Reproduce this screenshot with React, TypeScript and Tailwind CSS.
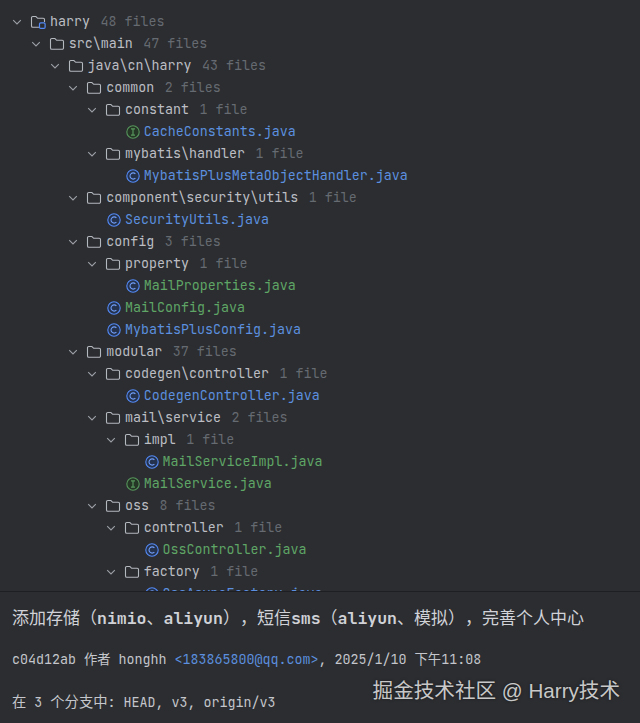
const rows: [number, string, string, string][] = [
  [0, "harry", "48 files", "m"],
  [1, "src\\main", "47 files", "d"],
  [2, "java\\cn\\harry", "43 files", "d"],
  [3, "common", "2 files", "d"],
  [4, "constant", "1 file", "d"],
  [5, "CacheConstants.java", "", "ib"],
  [4, "mybatis\\handler", "1 file", "d"],
  [5, "MybatisPlusMetaObjectHandler.java", "", "cb"],
  [3, "component\\security\\utils", "1 file", "d"],
  [4, "SecurityUtils.java", "", "cb"],
  [3, "config", "3 files", "d"],
  [4, "property", "1 file", "d"],
  [5, "MailProperties.java", "", "cg"],
  [4, "MailConfig.java", "", "cg"],
  [4, "MybatisPlusConfig.java", "", "cb"],
  [3, "modular", "37 files", "d"],
  [4, "codegen\\controller", "1 file", "d"],
  [5, "CodegenController.java", "", "cb"],
  [4, "mail\\service", "2 files", "d"],
  [5, "impl", "1 file", "d"],
  [6, "MailServiceImpl.java", "", "cg"],
  [5, "MailService.java", "", "ig"],
  [4, "oss", "8 files", "d"],
  [5, "controller", "1 file", "d"],
  [6, "OssController.java", "", "cg"],
  [5, "factory", "1 file", "d"],
  [6, "OssAsyncFactory.java", "", "cb"],
];

const mono = "font-['JetBrains_Mono','DejaVu_Sans_Mono','Noto_Sans_CJK_SC',monospace]";

function Chevron() {
  return (
    <svg width="14" height="14" viewBox="0 0 14 14" fill="none" className="shrink-0">
      <path d="M3.2 5.2 7 9l3.8-3.8" stroke="#9da0a8" strokeWidth="1.1" />
    </svg>
  );
}

function Folder({ module }: { module: boolean }) {
  return (
    <svg width="16" height="16" viewBox="0 0 16 16" fill="none" className="shrink-0">
      {module ? (
        <>
          <path d="M9.5 13.2H2.8a1.3 1.3 0 0 1-1.3-1.3V3.8a1.3 1.3 0 0 1 1.3-1.3h3.1l1.8 1.8h5.5a1.3 1.3 0 0 1 1.3 1.3V8" stroke="#b4b8bf" strokeWidth="1.1" />
          <rect x="9.5" y="8.8" width="5.6" height="5.6" rx="1.2" stroke="#548af7" strokeWidth="1.2" />
        </>
      ) : (
        <path d="M2.8 2.5h3.1l1.8 1.8h5.5a1.3 1.3 0 0 1 1.3 1.3v6.3a1.3 1.3 0 0 1-1.3 1.3H2.8a1.3 1.3 0 0 1-1.3-1.3V3.8a1.3 1.3 0 0 1 1.3-1.3Z" stroke="#b4b8bf" strokeWidth="1.1" />
      )}
    </svg>
  );
}

function FileIcon({ kind }: { kind: string }) {
  const iface = kind[0] === "i";
  const stroke = iface ? "#57965c" : "#548af7";
  return (
    <svg width="14" height="14" viewBox="0 0 14 14" fill="none" className="shrink-0">
      <circle cx="7" cy="7" r="6.2" stroke={stroke} strokeWidth="1.1" fill={iface ? "#253627" : "#25324d"} />
      {iface ? (
        <path d="M5 3.9h4M5 10.1h4M7 3.9v6.2" stroke={stroke} strokeWidth="1.2" />
      ) : (
        <path d="M9.4 4.9a3.1 3.1 0 1 0 0 4.2" stroke="#6f9df5" strokeWidth="1.1" />
      )}
    </svg>
  );
}

function Row({ depth, name, count, kind }: { depth: number; name: string; count: string; kind: string }) {
  const isDir = kind === "d" || kind === "m";
  const color = isDir ? "text-[#bcbec4]" : kind[1] === "b" ? "text-[#5c8fdf]" : "text-[#5fa566]";
  return (
    <div className="flex h-[22px] items-center" style={{ paddingLeft: 50 + depth * 18.75 - (isDir ? 40 : 18) }}>
      {isDir ? (
        <>
          <Chevron />
          <span className="w-[6px]" />
          <Folder module={kind === "m"} />
          <span className="w-1" />
        </>
      ) : (
        <>
          <FileIcon kind={kind} />
          <span className="w-1" />
        </>
      )}
      <span className={`whitespace-pre ${color}`}>{name}</span>
      {count && <span className="ml-[10.5px] whitespace-pre text-[#666a71]">{count}</span>}
    </div>
  );
}

function Cj({ children }: { children: string }) {
  return <span className="text-[17px] font-normal">{children}</span>;
}

export default function App() {
  return (
    <div className={`relative flex h-[723px] w-[640px] flex-col overflow-hidden bg-[#2b2d30] text-[13.33px] [text-spacing-trim:space-all] ${mono}`}>
      <div className="h-[592px] shrink-0 overflow-hidden border-b border-[#1e1f22] pt-[11px]">
        {rows.map((r, i) => (
          <Row key={i} depth={r[0]} name={r[1]} count={r[2]} kind={r[3]} />
        ))}
      </div>
      <div className="flex flex-col px-3 text-[#c4c6cc]">
        <div className="mt-[15px] h-[22px] whitespace-pre text-[16.5px] font-bold leading-[22px] text-[#d0d2d8]">
          <Cj>添加存储（</Cj>nimio<Cj>、</Cj>aliyun<Cj>），短信</Cj>sms<Cj>（</Cj>aliyun<Cj>、模拟），完善个人中心</Cj>
        </div>
        <div className="mt-[19px] h-[22px] whitespace-pre leading-[22px]">
          c04d12ab 作者 honghh <span className="text-[#5c8fdf]">&lt;183865800@qq.com&gt;</span>, 2025/1/10 下午11:08
        </div>
        <div className="mt-[21px] h-[22px] whitespace-pre leading-[22px]">
          <span className="text-[14.3px]">在</span> 3 <span className="text-[14.3px]">个分支中</span>: HEAD, v3, origin/v3
        </div>
      </div>
      <div className="absolute bottom-[19px] right-[20px] whitespace-pre font-['Liberation_Sans','Noto_Sans_CJK_SC',sans-serif] text-[20.6px] leading-[26px] text-[#c8c8c8] [text-shadow:0_0_3px_rgba(0,0,0,0.5)]">
        掘金技术社区 @ Harry技术
      </div>
    </div>
  );
}
